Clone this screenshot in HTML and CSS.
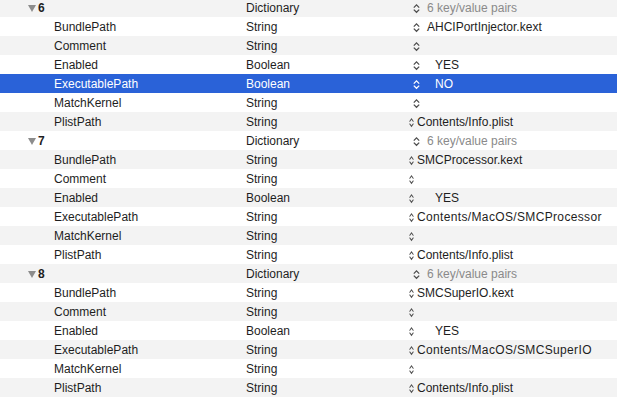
FILE: index.html
```html
<!DOCTYPE html>
<html>
<head>
<meta charset="utf-8">
<link rel="stylesheet" href="styles.css">
</head>
<body>
<svg width="0" height="0" class="defs">
  <defs>
    <symbol id="chev" viewBox="0 0 7 11" preserveAspectRatio="none">
      <path d="M0.8 4.6 L3.5 1.9 L6.2 4.6 M0.8 6.6 L3.5 9.3 L6.2 6.6" fill="none" stroke="currentColor" stroke-width="1.25"/>
    </symbol>
  </defs>
</svg>
<div class="list">
  <div class="row alt"><div class="key parent"><span class="tri"></span><b>6</b></div><div class="type">Dictionary</div><div class="val"><svg class="chev"><use href="#chev"/></svg><span class="dim">6 key/value pairs</span></div></div>
  <div class="row"><div class="key child">BundlePath</div><div class="type">String</div><div class="val"><svg class="chev"><use href="#chev"/></svg><span>AHCIPortInjector.kext</span></div></div>
  <div class="row alt"><div class="key child">Comment</div><div class="type">String</div><div class="val"><svg class="chev"><use href="#chev"/></svg></div></div>
  <div class="row"><div class="key child">Enabled</div><div class="type">Boolean</div><div class="val"><svg class="chev"><use href="#chev"/></svg><span class="bool">YES</span></div></div>
  <div class="row sel"><div class="key child">ExecutablePath</div><div class="type">Boolean</div><div class="val"><svg class="chev"><use href="#chev"/></svg><span class="bool">NO</span></div></div>
  <div class="row"><div class="key child">MatchKernel</div><div class="type">String</div><div class="val"><svg class="chev"><use href="#chev"/></svg></div></div>
  <div class="row alt narrow"><div class="key child">PlistPath</div><div class="type">String</div><div class="val"><svg class="chev"><use href="#chev"/></svg><span>Contents/Info.plist</span></div></div>

  <div class="row"><div class="key parent"><span class="tri"></span><b>7</b></div><div class="type">Dictionary</div><div class="val"><svg class="chev"><use href="#chev"/></svg><span class="dim">6 key/value pairs</span></div></div>
  <div class="row alt narrow"><div class="key child">BundlePath</div><div class="type">String</div><div class="val"><svg class="chev"><use href="#chev"/></svg><span>SMCProcessor.kext</span></div></div>
  <div class="row narrow"><div class="key child">Comment</div><div class="type">String</div><div class="val"><svg class="chev"><use href="#chev"/></svg></div></div>
  <div class="row alt narrow"><div class="key child">Enabled</div><div class="type">Boolean</div><div class="val"><svg class="chev"><use href="#chev"/></svg><span class="bool">YES</span></div></div>
  <div class="row narrow"><div class="key child">ExecutablePath</div><div class="type">String</div><div class="val"><svg class="chev"><use href="#chev"/></svg><span class="path">Contents/MacOS/SMCProcessor</span></div></div>
  <div class="row alt narrow"><div class="key child">MatchKernel</div><div class="type">String</div><div class="val"><svg class="chev"><use href="#chev"/></svg></div></div>
  <div class="row narrow"><div class="key child">PlistPath</div><div class="type">String</div><div class="val"><svg class="chev"><use href="#chev"/></svg><span>Contents/Info.plist</span></div></div>

  <div class="row alt"><div class="key parent"><span class="tri"></span><b>8</b></div><div class="type">Dictionary</div><div class="val"><svg class="chev"><use href="#chev"/></svg><span class="dim">6 key/value pairs</span></div></div>
  <div class="row narrow"><div class="key child">BundlePath</div><div class="type">String</div><div class="val"><svg class="chev"><use href="#chev"/></svg><span>SMCSuperIO.kext</span></div></div>
  <div class="row alt narrow"><div class="key child">Comment</div><div class="type">String</div><div class="val"><svg class="chev"><use href="#chev"/></svg></div></div>
  <div class="row narrow"><div class="key child">Enabled</div><div class="type">Boolean</div><div class="val"><svg class="chev"><use href="#chev"/></svg><span class="bool">YES</span></div></div>
  <div class="row alt narrow"><div class="key child">ExecutablePath</div><div class="type">String</div><div class="val"><svg class="chev"><use href="#chev"/></svg><span class="path">Contents/MacOS/SMCSuperIO</span></div></div>
  <div class="row narrow"><div class="key child">MatchKernel</div><div class="type">String</div><div class="val"><svg class="chev"><use href="#chev"/></svg></div></div>
  <div class="row alt narrow"><div class="key child">PlistPath</div><div class="type">String</div><div class="val"><svg class="chev"><use href="#chev"/></svg><span>Contents/Info.plist</span></div></div>
  <div class="row"><div class="key child"></div><div class="type"></div><div class="val"></div></div>
</div>
</body>
</html>
```

FILE: styles.css
```css
html, body {
  margin: 0;
  padding: 0;
  background: #ffffff;
  overflow: hidden;
  width: 617px;
  height: 402px;
}

.defs {
  position: absolute;
  width: 0;
  height: 0;
}

.list {
  margin-top: -2px;
  font-family: "Liberation Sans", Arial, sans-serif;
  font-size: 12px;
  color: #1e1e1e;
}

.row {
  display: grid;
  grid-template-columns: 246px 164px 1fr;
  height: 19px;
  line-height: 19px;
  background: #ffffff;
  white-space: nowrap;
}

.row > div {
  padding-top: 1px;
  height: 18px;
  overflow: visible;
}

.row.alt {
  background: #f3f3f3;
}

.row.sel {
  background: #2a62d8;
  color: #ffffff;
}

.key {
  display: flex;
  align-items: center;
}

.key.child {
  padding-left: 54px;
}

.key.parent {
  padding-left: 28px;
}

.key b {
  font-weight: bold;
  margin-left: 2px;
}

.tri {
  width: 0;
  height: 0;
  border-left: 4px solid transparent;
  border-right: 4px solid transparent;
  border-top: 7px solid #8c8c8c;
  margin-top: 1px;
}

.val {
  display: flex;
  align-items: center;
}

.chev {
  width: 7px;
  height: 11px;
  margin-left: 3px;
  margin-right: 7px;
  color: #4d4d4d;
  flex: none;
}

.row.sel .chev {
  color: #ffffff;
}

.row.narrow .chev {
  width: 5px;
  margin-left: -1px;
  margin-right: 3px;
}

.dim {
  color: #8a8a8a;
}

.path {
  letter-spacing: 0.35px;
}

.bool {
  margin-left: 8px;
}

.row.narrow .bool {
  margin-left: 18px;
}
```
